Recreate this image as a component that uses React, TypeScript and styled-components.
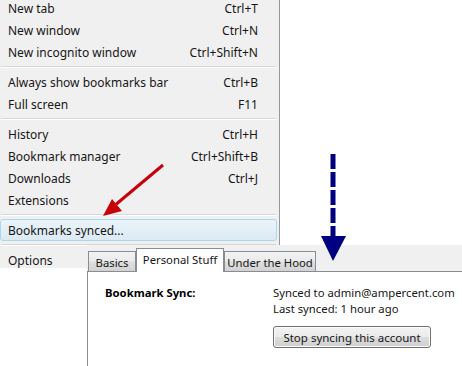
import React from "react";
import styled, { createGlobalStyle } from "styled-components";

const GlobalStyle = createGlobalStyle`
  html, body {
    margin: 0;
    padding: 0;
    background: #ffffff;
  }
  body {
    font-family: "Segoe UI", "Noto Sans", sans-serif;
    font-size: 12px;
    color: #161616;
  }
`;

const Stage = styled.div`
  position: relative;
  width: 462px;
  height: 366px;
  overflow: hidden;
  background: #ffffff;
`;

const Menu = styled.div`
  width: 279px;
  height: 268px;
  background: #f0f0f0;
  border-right: 1px solid #979797;
  overflow: hidden;
`;

const MenuBody = styled.div`
  margin-top: -3px;
  display: flex;
  flex-direction: column;
`;

const MenuItem = styled.div<{ active?: boolean }>`
  height: 22px;
  display: flex;
  align-items: center;
  justify-content: space-between;
  padding: 0 18px 0 7px;
  margin-right: 2px;
  box-sizing: border-box;
  border: 1px solid ${(p) => (p.active ? "#a8d8eb" : "transparent")};
  border-radius: 3px;
  background: ${(p) =>
    p.active ? "linear-gradient(#eaf4fa, #dceaf3)" : "transparent"};
  white-space: nowrap;
`;

const Separator = styled.div`
  height: 8px;
  display: flex;
  flex-direction: column;
  justify-content: center;
  margin: 0 3px 0 1px;
  &::before {
    content: "";
    height: 1px;
    background: #d7d7d7;
  }
  &::after {
    content: "";
    height: 1px;
    background: #ffffff;
  }
`;

const Dialog = styled.div`
  position: absolute;
  left: 87px;
  top: 245px;
  right: 0;
  bottom: 0;
  display: flex;
  flex-direction: column;
  font-size: 11.3px;
`;

const TabBar = styled.div`
  height: 26px;
  background: #f0f0f0;
  border-bottom: 1px solid #898c95;
  display: flex;
  align-items: flex-end;
  padding-left: 1px;
`;

const Tab = styled.div<{ selected?: boolean; w: number }>`
  width: ${(p) => p.w}px;
  height: ${(p) => (p.selected ? 24 : 20)}px;
  box-sizing: border-box;
  margin-bottom: ${(p) => (p.selected ? -1 : 0)}px;
  border: 1px solid #898c95;
  border-bottom: none;
  position: relative;
  z-index: ${(p) => (p.selected ? 2 : 1)};
  background: ${(p) =>
    p.selected ? "#ffffff" : "linear-gradient(#f3f3f3 0%, #ebebeb 45%, #dedede 55%, #d2d2d2 100%)"};
  display: flex;
  align-items: ${(p) => (p.selected ? "flex-start" : "center")};
  padding-top: ${(p) => (p.selected ? 3 : 1)}px;
  justify-content: center;
  white-space: nowrap;
`;

const Panel = styled.div`
  flex: 1;
  background: #ffffff;
  border-left: 1px solid #898c95;
  padding: 13px 0 0 17px;
  display: grid;
  grid-template-columns: 168px auto;
  align-content: start;
  line-height: 16px;
`;

const Label = styled.div`
  font-weight: bold;
  color: #000000;
`;

const SyncInfo = styled.div`
  display: flex;
  flex-direction: column;
  align-items: flex-start;
  white-space: nowrap;
`;

const Button = styled.button`
  margin-top: 9px;
  width: 158px;
  height: 22px;
  font-family: inherit;
  font-size: 11.5px;
  color: #161616;
  border: 1px solid #707070;
  border-radius: 3px;
  background: linear-gradient(#f2f2f2 0%, #ebebeb 50%, #dddddd 51%, #cfcfcf 100%);
  box-shadow: inset 0 0 0 1px #fcfcfc;
  padding: 0;
`;

const Overlay = styled.svg`
  position: absolute;
  left: 0;
  top: 0;
  pointer-events: none;
`;

type Row = { label: string; key?: string };

const groups: Row[][] = [
  [
    { label: "New tab", key: "Ctrl+T" },
    { label: "New window", key: "Ctrl+N" },
    { label: "New incognito window", key: "Ctrl+Shift+N" },
  ],
  [
    { label: "Always show bookmarks bar", key: "Ctrl+B" },
    { label: "Full screen", key: "F11" },
  ],
  [
    { label: "History", key: "Ctrl+H" },
    { label: "Bookmark manager", key: "Ctrl+Shift+B" },
    { label: "Downloads", key: "Ctrl+J" },
    { label: "Extensions" },
  ],
];

export default function App() {
  return (
    <Stage>
      <GlobalStyle />
      <Menu>
        <MenuBody>
          {groups.map((g, i) => (
            <React.Fragment key={i}>
              {i > 0 && <Separator />}
              {g.map((r) => (
                <MenuItem key={r.label}>
                  <span>{r.label}</span>
                  {r.key && <span>{r.key}</span>}
                </MenuItem>
              ))}
            </React.Fragment>
          ))}
          <Separator />
          <MenuItem active>
            <span>Bookmarks synced...</span>
          </MenuItem>
          <Separator />
          <MenuItem>
            <span>Options</span>
          </MenuItem>
        </MenuBody>
      </Menu>

      <Dialog>
        <TabBar>
          <Tab w={48}>Basics</Tab>
          <Tab w={88} selected>
            Personal Stuff
          </Tab>
          <Tab w={92}>Under the Hood</Tab>
        </TabBar>
        <Panel>
          <Label>Bookmark Sync:</Label>
          <SyncInfo>
            <span>Synced to admin@ampercent.com</span>
            <span>Last synced: 1 hour ago</span>
            <Button>Stop syncing this account</Button>
          </SyncInfo>
        </Panel>
      </Dialog>

      <Overlay width="462" height="366" viewBox="0 0 462 366">
        <line x1="163" y1="165" x2="114" y2="206" stroke="#c8000a" strokeWidth="3" />
        <polygon points="103,216 112,199 122,211" fill="#c8000a" />
        <line
          x1="333"
          y1="154"
          x2="333"
          y2="236"
          stroke="#000080"
          strokeWidth="5"
          strokeDasharray="15 3"
        />
        <polygon points="321,236 346,236 333,261" fill="#000080" />
      </Overlay>
    </Stage>
  );
}
